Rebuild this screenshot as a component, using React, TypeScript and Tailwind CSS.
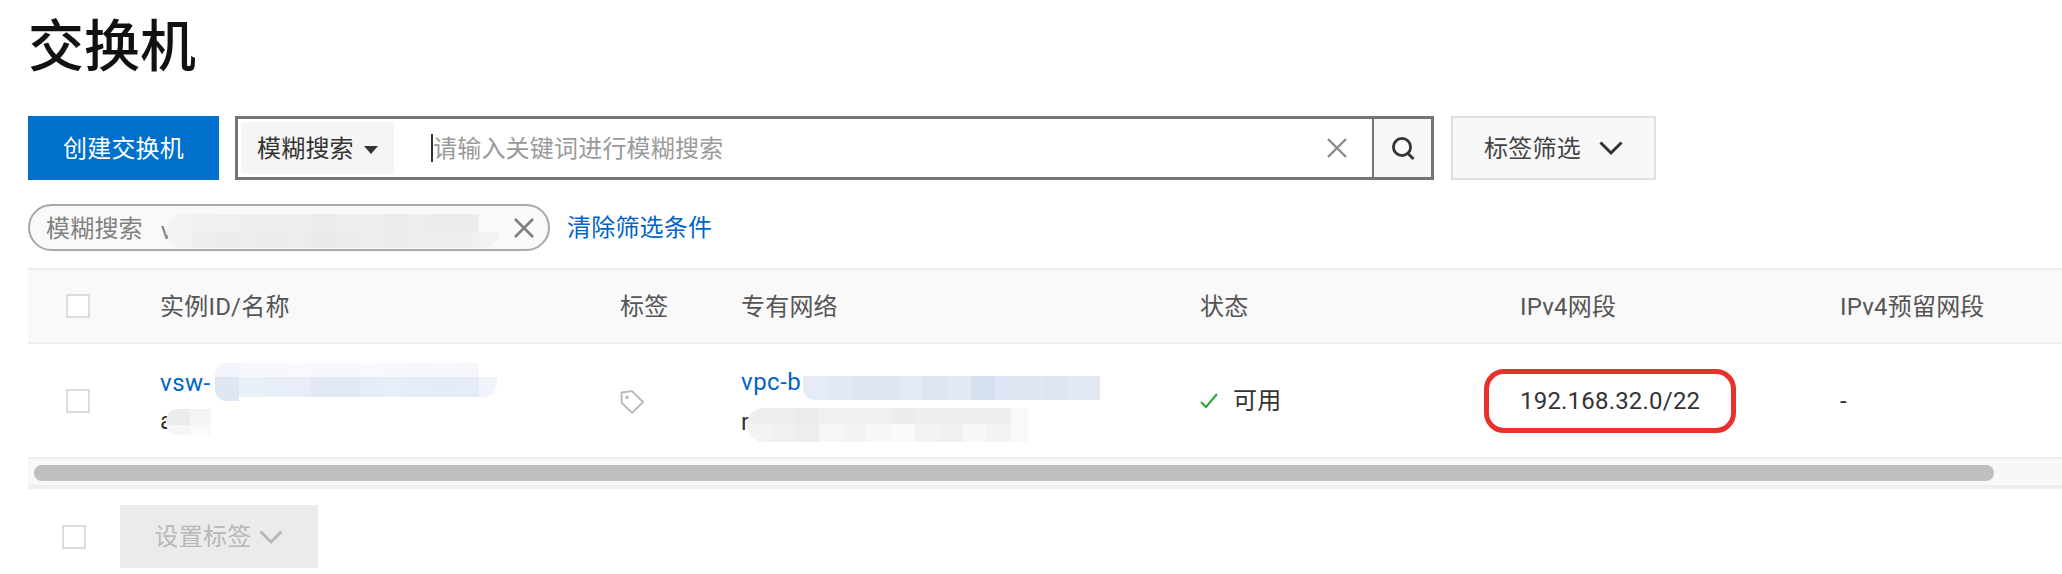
import React from "react";

const FONT = '"Roboto", "Noto Sans CJK SC", sans-serif';

type Row = { h: number; cells: string[]; cls?: string };

function Mosaic({ rows, className }: { rows: Row[]; className: string }) {
  return (
    <span className={`absolute flex flex-col overflow-hidden ${className}`}>
      {rows.map((r, i) => (
        <span key={i} className={`flex shrink-0 overflow-hidden ${r.cls ?? ""}`} style={{ height: r.h }}>
          {r.cells.map((c, j) => (
            <span key={j} className="h-full w-[24px] shrink-0" style={{ backgroundColor: c }} />
          ))}
        </span>
      ))}
    </span>
  );
}

function Check({ className = "" }: { className?: string }) {
  return <span className={`block h-6 w-6 shrink-0 border-2 border-[#dcdcdc] bg-white ${className}`} />;
}

function X({ size, color, width = 2 }: { size: number; color: string; width?: number }) {
  return (
    <svg width={size} height={size} viewBox="0 0 20 20" fill="none" stroke={color} strokeWidth={width}>
      <path d="M1 1l18 18M19 1L1 19" />
    </svg>
  );
}

function Chevron({ color, size = 24 }: { color: string; size?: number }) {
  return (
    <svg width={size} height={size} viewBox="0 0 24 24" fill="none" stroke={color} strokeWidth="3">
      <path d="M1.5 6.5L12 17 22.5 6.5" />
    </svg>
  );
}

const T = "transparent";

export default function App() {
  return (
    <div
      className="h-[574px] w-[2062px] overflow-hidden bg-white pl-[28px] text-[24px] tracking-[0.2px] text-[#333]"
      style={{ fontFamily: FONT }}
    >
      <h1 className="h-[116px] pt-[11px] text-[56px] font-medium leading-[72px] tracking-normal text-[#111]">交换机</h1>

      <div className="flex h-[64px] items-stretch">
        <button className="w-[191px] bg-[#0070cc] pt-[2px] text-white">创建交换机</button>
        <div className="ml-[16px] flex w-[1199px] items-center border-[3px] border-[#757575] pl-[3px]">
          <div className="flex h-[52px] w-[153px] items-center bg-[#f5f5f5] pl-[16px]">
            <span className="pt-[2px]">模糊搜索</span>
            <span className="ml-[10px] mt-[3px] border-x-[7px] border-t-[8px] border-x-transparent border-t-[#333]" />
          </div>
          <span className="ml-[37px] h-[28px] w-[2px] bg-[#333]" />
          <span className="pt-[2px] text-[#9a9a9a]">请输入关键词进行模糊搜索</span>
          <span className="ml-auto mr-[25px] flex"><X size={20} color="#8c8c8c" width={2.4} /></span>
          <div className="flex h-full w-[59px] items-center justify-center border-l-2 border-[#757575] bg-[#f8f8f8]">
            <svg width="24" height="24" viewBox="0 0 24 24" fill="none" stroke="#333" strokeWidth="2.8">
              <circle cx="11" cy="11" r="8.6" />
              <path d="M16.5 17l6 6" />
            </svg>
          </div>
        </div>
        <button className="ml-[17px] flex w-[205px] items-center justify-center gap-[18px] border-2 border-[#e0e0e0] bg-[#f8f8f8] text-[#444]">
          <span className="pt-[2px]">标签筛选</span>
          <Chevron color="#333" />
        </button>
      </div>

      <div className="mt-[24px] flex h-[47px] items-center">
        <div className="flex h-full w-[522px] items-center rounded-full border-2 border-[#a8a8a8] bg-[#f9f9f9] pl-[16px]">
          <span className="pt-[2px] text-[#808080]">模糊搜索</span>
          <span className="relative ml-[18px] mt-[7px] inline-flex h-[34px] w-[338px] items-center text-[#808080]">
            <span>v</span>
            <Mosaic
              className="inset-y-0 left-[6px] right-0 rounded-[16px]"
              rows={[
                { h: 18, cells: ["#f2f2f2", "#f1f1f1", "#f0f0f0", "#efefef", "#eeeeee", "#eeeeee", "#ebebeb", "#ededed", "#efefef", "#ebebeb", "#ededed", "#ebebeb", "#ececec", T, T] },
                { h: 16, cells: ["#f2f2f2", "#efefef", "#ebebeb", "#ededed", "#ececec", "#ededed", "#eaeaea", "#ececec", "#eeeeee", "#ececec", "#ededed", "#eeeeee", "#efefef", "#f2f2f2", "#f4f4f4"] },
              ]}
            />
          </span>
          <span className="ml-[15px] flex"><X size={20} color="#808080" width={2.6} /></span>
        </div>
        <span className="ml-[17px] text-[#0064c8]">清除筛选条件</span>
      </div>

      <div className="mt-[17px] border-t-2 border-[#eeeeee]">
        <div className="flex h-[74px] items-center border-b-2 border-[#eeeeee] bg-[#f9f9f9] text-[#555]">
          <Check className="ml-[38px]" />
          <span className="ml-[70px] w-[460px] pt-[2px]">实例ID/名称</span>
          <span className="w-[121px] pt-[2px]">标签</span>
          <span className="w-[459px] pt-[2px]">专有网络</span>
          <span className="w-[320px] pt-[2px]">状态</span>
          <span className="w-[320px] pt-[2px]">IPv4网段</span>
          <span className="pt-[2px]">IPv4预留网段</span>
        </div>

        <div className="flex h-[115px] items-center border-b-2 border-[#eeeeee]">
          <Check className="ml-[38px]" />
          <div className="ml-[70px] w-[460px]">
            <div className="relative h-[36px] leading-[36px] tracking-[0.5px] text-[#0064c8]">
              <span>vsw-</span>
              <Mosaic
                className="left-[55px] top-[-2px] h-[38px] w-[282px] rounded-l-[12px]"
                rows={[
                  { h: 14, cells: ["#f1f4fb", "#f6f8fc", "#f6f8fc", "#f7f9fc", "#f6f8fc", "#f6f8fc", "#f7f9fc", "#f6f8fc", "#f5f7fb", "#f6f8fc", "#f5f7fb", T] },
                  { h: 20, cells: ["#dfe7f5", "#eaf0f8", "#e8eef8", "#e8edf7", "#e2e9f5", "#e2e9f5", "#e6ecf7", "#e8eef8", "#e6ecf7", "#e4ebf6", "#e6ecf7", "#f0f3fa"], cls: "rounded-br-[14px]" },
                  { h: 4, cells: ["#dfe7f5", "#ffffff00"], cls: "rounded-bl-[10px]" },
                ]}
              />
            </div>
            <div className="relative mt-[4px] h-[32px] leading-[32px]">
              <span>a</span>
              <Mosaic
                className="left-[6px] top-[4px] h-[26px] w-[45px] rounded-l-[12px]"
                rows={[
                  { h: 16, cells: ["#ebebeb", "#f4f4f4"] },
                  { h: 10, cells: ["#f5f5f5", "#fafafa"] },
                ]}
              />
            </div>
          </div>
          <span className="mt-[2px] flex w-[121px]">
            <svg width="24" height="24" viewBox="0 0 24 24" fill="none" stroke="#b8b8b8" strokeWidth="1.8">
              <path d="M1.5 2.5L12 1.2 23 12 12.2 22.8 1.8 13z" strokeLinejoin="round" />
              <circle cx="7" cy="7.5" r="1.7" fill="#b8b8b8" stroke="none" />
            </svg>
          </span>
          <div className="w-[459px]">
            <div className="relative h-[36px] leading-[36px] tracking-[0.5px] text-[#0064c8]">
              <span>vpc-b</span>
              <Mosaic
                className="left-[62px] top-[12px] h-[24px] w-[297px] rounded-bl-[12px]"
                rows={[
                  { h: 24, cells: ["#e6ecf7", "#e2e9f6", "#e0e7f4", "#e0e7f4", "#e3e9f5", "#dde5f3", "#e2e9f5", "#d5e0f0", "#dfe6f4", "#dfe6f4", "#dde5f3", "#e2e9f5", "#e2e9f5"] },
                ]}
              />
            </div>
            <div className="relative mt-[4px] h-[34px] leading-[36px]">
              <span>r</span>
              <Mosaic
                className="left-[6px] top-[4px] h-[34px] w-[281px] rounded-l-[16px]"
                rows={[
                  { h: 16, cells: ["#efefef", "#eeeeee", "#ebebeb", "#f0f0f0", "#f0f0f0", "#f0f0f0", "#ececec", "#eeeeee", "#eeeeee", "#eeeeee", "#eeeeee", "#f9f9f9"] },
                  { h: 18, cells: ["#f3f3f3", "#f1f1f1", "#ededed", "#f6f6f6", "#f3f3f3", "#f8f8f8", "#fafafa", "#f3f3f3", "#f1f1f1", "#f8f8f8", "#f3f3f3", "#f9f9f9"] },
                ]}
              />
            </div>
          </div>
          <div className="flex w-[320px] items-center">
            <svg width="18" height="16" viewBox="0 0 18 16" fill="none" stroke="#22a83a" strokeWidth="2">
              <path d="M1 9l5 5L17 1" />
            </svg>
            <span className="ml-[15px]">可用</span>
          </div>
          <div className="w-[320px]">
            <span className="-ml-[36px] inline-flex h-[64px] w-[252px] items-center rounded-[20px] border-[5px] border-[#e8312a] pl-[31px]">192.168.32.0/22</span>
          </div>
          <span>-</span>
        </div>

        <div className="flex h-[30px] items-start border-b-[4px] border-[#eeeeee] bg-[#f8f8f8] pl-[6px] pt-[6px]">
          <div className="h-[16px] w-[1960px] rounded-full bg-[#bfbfbf]" />
        </div>
      </div>

      <div className="mt-[16px] flex items-center">
        <Check className="ml-[34px]" />
        <button className="ml-[34px] flex h-[63px] w-[198px] items-center justify-center gap-[8px] bg-[#ebebeb] text-[#b8b8b8]">
          <span>设置标签</span>
          <Chevron color="#b8b8b8" />
        </button>
      </div>
    </div>
  );
}
